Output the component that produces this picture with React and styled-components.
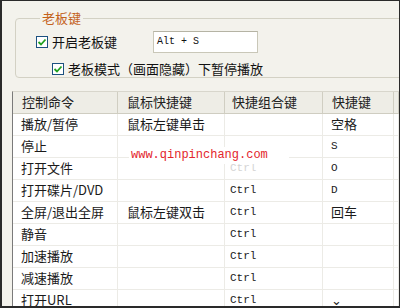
import React from "react";
import styled, { createGlobalStyle } from "styled-components";

const Global = createGlobalStyle`
  html, body { margin: 0; padding: 0; background: #fff; }
  body { font-family: "Noto Sans CJK SC", "Noto Sans", sans-serif; }
  * { box-sizing: border-box; }
`;

const Frame = styled.div`
  position: relative;
  width: 400px;
  height: 308px;
  background: #f3f2ec;
  border-top: 1px solid #2a2a2a;
  border-left: 2px solid #2a2a2a;
  border-bottom: 2px solid #2a2a2a;
  border-right: 1px solid #2a2a2a;
  overflow: hidden;
  display: flex;
  flex-direction: column;
`;

const Group = styled.fieldset`
  margin: 9px -20px 0 13px;
  padding: 0 0 0 18px;
  height: 70px;
  border: 1px solid #d3d1c4;
  border-radius: 4px;
  display: flex;
  flex-direction: column;
`;

const Legend = styled.legend`
  padding: 0 2px;
  margin-left: 6px;
  font-size: 13px;
  line-height: 16px;
  color: #c4621c;
`;

const Row = styled.div`
  display: flex;
  align-items: center;
  gap: 4px;
  margin-left: ${(p) => p.$indent || 0}px;
  margin-top: ${(p) => p.$top || 0}px;
  height: ${(p) => p.$h || 16}px;
`;

const Check = styled.span`
  width: 12px;
  height: 12px;
  border: 1px solid #1c5180;
  background: #fff;
  display: inline-flex;
  align-items: center;
  justify-content: center;
  flex: none;
`;

const Label = styled.span`
  font-size: 13px;
  line-height: 16px;
  color: #111;
  white-space: nowrap;
`;

const Input = styled.div`
  margin-left: 32px;
  width: 105px;
  height: 22px;
  border: 1px solid #c9c7b8;
  border-top-color: #b5b3a4;
  background: #fff;
  font-family: "Liberation Mono", monospace;
  font-size: 10px;
  line-height: 20px;
  padding-left: 3px;
  color: #111;
`;

const Table = styled.div`
  margin: 13px 0 0 10px;
  flex: 1;
  background: #fff;
  border-left: 1px solid #7a7a7a;
  border-top: 1px solid #d8d6cc;
  display: grid;
  grid-template-columns: 105px 107px 98px 71px 1fr;
  grid-auto-rows: 22px;
  align-content: start;
  position: relative;
`;

const Head = styled.div`
  background: #eeede6;
  border-right: 1px solid #d0cec2;
  border-bottom: 1px solid #cfcdc1;
  font-size: 13px;
  line-height: 20px;
  padding-left: ${(p) => p.$pad}px;
  color: #222;
  white-space: nowrap;
`;

const Cell = styled.div`
  border-right: 1px solid #ecebe6;
  border-bottom: 1px solid #ecebe6;
  font-family: ${(p) =>
    p.$mono ? `"Liberation Mono", monospace` : `"Noto Sans CJK SC", sans-serif`};
  font-size: ${(p) => (p.$mono ? 11 : 13)}px;
  line-height: 18px;
  padding: 1px 0 0 ${(p) => p.$pad}px;
  color: ${(p) => (p.$faint ? "#d4d4d4" : "#1a1a1a")};
  white-space: nowrap;
  overflow: hidden;
`;

const Watermark = styled.div`
  position: absolute;
  left: 116px;
  top: 55px;
  width: 160px;
  height: 17px;
  background: #fff;
  color: #e3262c;
  font-family: "Liberation Mono", monospace;
  font-size: 12px;
  line-height: 17px;
  padding-left: 2px;
  white-space: nowrap;
`;

const Tick = () => (
  <svg width="10" height="10" viewBox="0 0 10 10">
    <path d="M1.5 5 L4 7.5 L8.5 2.5" stroke="#21a121" strokeWidth="1.8" fill="none" />
  </svg>
);

const heads = [
  ["控制命令", 9],
  ["鼠标快捷键", 9],
  ["快捷组合键", 7],
  ["快捷键", 9],
];

const rows = [
  ["播放/暂停", "鼠标左键单击", "", "空格"],
  ["停止", "", "", "S"],
  ["打开文件", "", "~faint", "O"],
  ["打开碟片/DVD", "", "Ctrl", "D"],
  ["全屏/退出全屏", "鼠标左键双击", "Ctrl", "回车"],
  ["静音", "", "Ctrl", ""],
  ["加速播放", "", "Ctrl", ""],
  ["减速播放", "", "Ctrl", ""],
  ["打开URL", "", "Ctrl", "⌄"],
];

export default function App() {
  return (
    <>
      <Global />
      <Frame>
        <Group>
          <Legend>老板键</Legend>
          <Row $indent={2} $top={5} $h={22}>
            <Check><Tick /></Check>
            <Label>开启老板键</Label>
            <Input>Alt + S</Input>
          </Row>
          <Row $indent={18} $top={8}>
            <Check><Tick /></Check>
            <Label>老板模式（画面隐藏）下暂停播放</Label>
          </Row>
        </Group>
        <Table>
          {heads.map(([t, p]) => (
            <Head key={t} $pad={p}>{t}</Head>
          ))}
          <Head $pad={0} />
          {rows.map((r, i) => (
            <React.Fragment key={i}>
              <Cell $pad={8}>{r[0]}</Cell>
              <Cell $pad={9}>{r[1]}</Cell>
              <Cell $pad={5} $mono $faint={r[2] === "~faint"}>
                {r[2] === "~faint" ? "Ctrl" : r[2]}
              </Cell>
              <Cell $pad={8} $mono={/^[A-Z]$/.test(r[3])}>{r[3]}</Cell>
              <Cell $pad={0} />
            </React.Fragment>
          ))}
          <Watermark>www.qinpinchang.com</Watermark>
        </Table>
      </Frame>
    </>
  );
}
